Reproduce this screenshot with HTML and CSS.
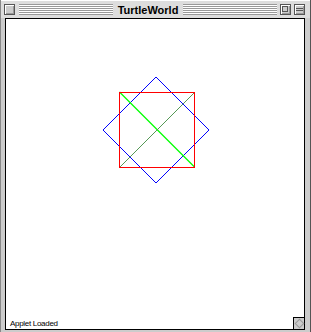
FILE: index.html
```html
<!DOCTYPE html>
<html>
<head>
<meta charset="utf-8">
<link rel="stylesheet" href="styles.css">
</head>
<body>
<div class="window">
  <div class="titlebar">
    <span class="box close"></span>
    <span class="stripes"></span>
    <span class="title">TurtleWorld</span>
    <span class="stripes"></span>
    <span class="box zoom"><span class="zoom-inner"></span></span>
    <span class="box collapse"><span class="collapse-line"></span></span>
  </div>
  <div class="content">
    <svg class="canvas" width="300" height="298" viewBox="0 0 300 298">
      <polygon points="150,58 203,111 150,164 97,111" fill="none" stroke="#0000ff" stroke-width="1"/>
      <line x1="113.5" y1="73" x2="188.5" y2="148" stroke="#00ff00" stroke-width="1.3"/>
      <line x1="113.5" y1="148.5" x2="188.5" y2="73.5" stroke="#559955" stroke-width="1"/>
      <rect x="113.5" y="73.5" width="75" height="75" fill="none" stroke="#ff0000" stroke-width="1.4" shape-rendering="crispEdges"/>
    </svg>
    <div class="statusrow">
      <span class="status">Applet Loaded</span>
      <span class="grow"></span>
    </div>
  </div>
</div>
</body>
</html>
```
FILE: styles.css
```css
* { box-sizing: border-box; }
html, body { margin: 0; padding: 0; background: #ffffff; }
.window {
  width: 311px;
  height: 332px;
  background: #cccccc;
  display: flex;
  flex-direction: column;
  padding: 0 5px 2px 4px;
  border-left: 1px solid #888888;
  border-right: 1px solid #555555;
}
.titlebar {
  display: flex;
  align-items: center;
  gap: 3px;
  height: 18px;
  margin: 0 -5px 0 -4px;
  padding: 0 5px 0 3px;
  background: #dddddd;
  border-top: 1px solid #ffffff;
}
.box {
  width: 11px;
  height: 11px;
  flex: none;
  border: 1px solid #555555;
  background: #cccccc;
  box-shadow: inset 1px 1px 0 #ffffff, inset -1px -1px 0 #999999;
  position: relative;
}
.close { margin-right: 1px; }
.zoom-inner {
  position: absolute;
  left: 1px; top: 1px;
  width: 6px; height: 6px;
  border: 1px solid #555555;
}
.collapse-line {
  position: absolute;
  left: 1px; right: 1px; top: 3px;
  height: 3px;
  border-top: 1px solid #555555;
  border-bottom: 1px solid #555555;
}
.stripes {
  flex: 1;
  height: 11px;
  background: repeating-linear-gradient(to bottom, #999999 0 1px, #ffffff 1px 2px);
}
.title {
  font-family: "Liberation Sans", Arial, sans-serif;
  font-weight: bold;
  font-size: 11px;
  color: #000000;
  padding: 0 2px;
  line-height: 12px;
}
.content {
  flex: 1;
  background: #ffffff;
  border: 1px solid #000000;
  display: flex;
  flex-direction: column;
  min-height: 0;
}
.canvas { display: block; flex: 1; }
.statusrow {
  display: flex;
  align-items: flex-end;
  justify-content: space-between;
  height: 12px;
}
.status {
  font-family: "Liberation Sans", Arial, sans-serif;
  font-size: 8px;
  letter-spacing: -0.3px;
  line-height: 10px;
  padding-left: 4px;
  color: #000000;
}
.grow {
  width: 11px;
  height: 12px;
  border-left: 1px solid #000000;
  border-top: 1px solid #000000;
  background: #cccccc;
  position: relative;
}
.grow::after {
  content: "";
  position: absolute;
  left: 2px; top: 2px;
  width: 5px; height: 5px;
  border: 1px solid #999999;
  transform: rotate(45deg);
}
```
